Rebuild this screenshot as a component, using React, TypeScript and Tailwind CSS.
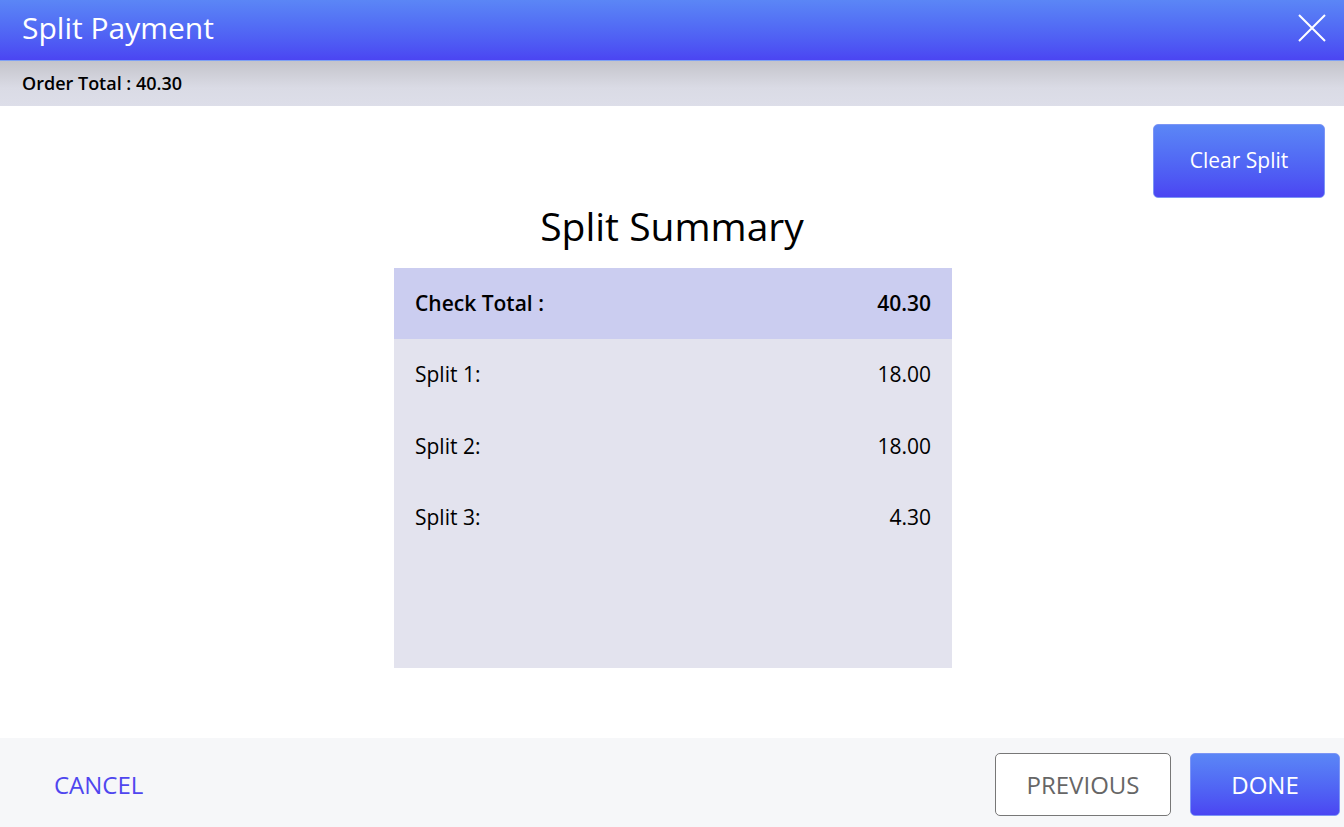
export default function App() {
  const splits = [
    { label: "Split 1:", amount: "18.00" },
    { label: "Split 2:", amount: "18.00" },
    { label: "Split 3:", amount: "4.30" },
  ];

  return (
    <div className="flex h-[827px] w-[1344px] flex-col bg-white font-['Open_Sans',sans-serif] text-black">
      {/* header */}
      <div className="flex h-[61px] shrink-0 items-center justify-between border-b border-[#7fa0f5] bg-gradient-to-b from-[#5b86f6] to-[#4b45f2] pb-[4px] pl-[22px] pr-[18px]">
        <h1 className="text-[30px] leading-none text-white">Split Payment</h1>
        <button className="flex h-[28px] w-[28px] items-center justify-center">
          <svg width="28" height="28" viewBox="0 0 28 28" fill="none" stroke="white" strokeWidth="2">
            <path d="M1 1 L27 27 M27 1 L1 27" />
          </svg>
        </button>
      </div>

      {/* order total bar */}
      <div className="flex h-[45px] shrink-0 items-center bg-gradient-to-b from-[#c4c4cb] via-[#dadbe5] via-60% to-[#dddee9] px-[22px] text-[18px] font-semibold">
        Order Total : 40.30
      </div>

      {/* body */}
      <div className="flex flex-1 flex-col items-center px-[19px] pt-[18px]">
        <div className="flex w-full justify-end">
          <button className="h-[74px] w-[172px] rounded-[5px] border border-[#7c95f5] bg-gradient-to-b from-[#5b86f6] to-[#4b45f2] text-[21px] text-white">
            Clear Split
          </button>
        </div>
        <h2 className="mt-[2px] text-[39px] leading-[52px]">Split Summary</h2>
        <div className="ml-[2px] mt-[16px] flex h-[400px] w-[558px] flex-col bg-[#e3e3ee]">
          <div className="flex h-[71px] items-center justify-between bg-[#cbcdf0] px-[21px] text-[21px] font-semibold">
            <span>Check Total :</span>
            <span>40.30</span>
          </div>
          {splits.map((s) => (
            <div key={s.label} className="flex h-[71.5px] items-center justify-between px-[21px] text-[21px]">
              <span>{s.label}</span>
              <span>{s.amount}</span>
            </div>
          ))}
        </div>
      </div>

      {/* footer */}
      <div className="flex h-[89px] shrink-0 items-center justify-between bg-[#f6f7f9] pl-[54px] pr-[4px] pt-[4px]">
        <button className="text-[24px] font-medium text-[#4f46ef]">CANCEL</button>
        <div className="flex items-center gap-[19px]">
          <button className="h-[63px] w-[176px] rounded-[5px] border border-[#777777] bg-white text-[24px] text-[#666666]">
            PREVIOUS
          </button>
          <button className="h-[63px] w-[150px] rounded-[5px] border border-[#7c95f5] bg-gradient-to-b from-[#5b86f6] to-[#4b45f2] text-[24px] text-white">
            DONE
          </button>
        </div>
      </div>
    </div>
  );
}
